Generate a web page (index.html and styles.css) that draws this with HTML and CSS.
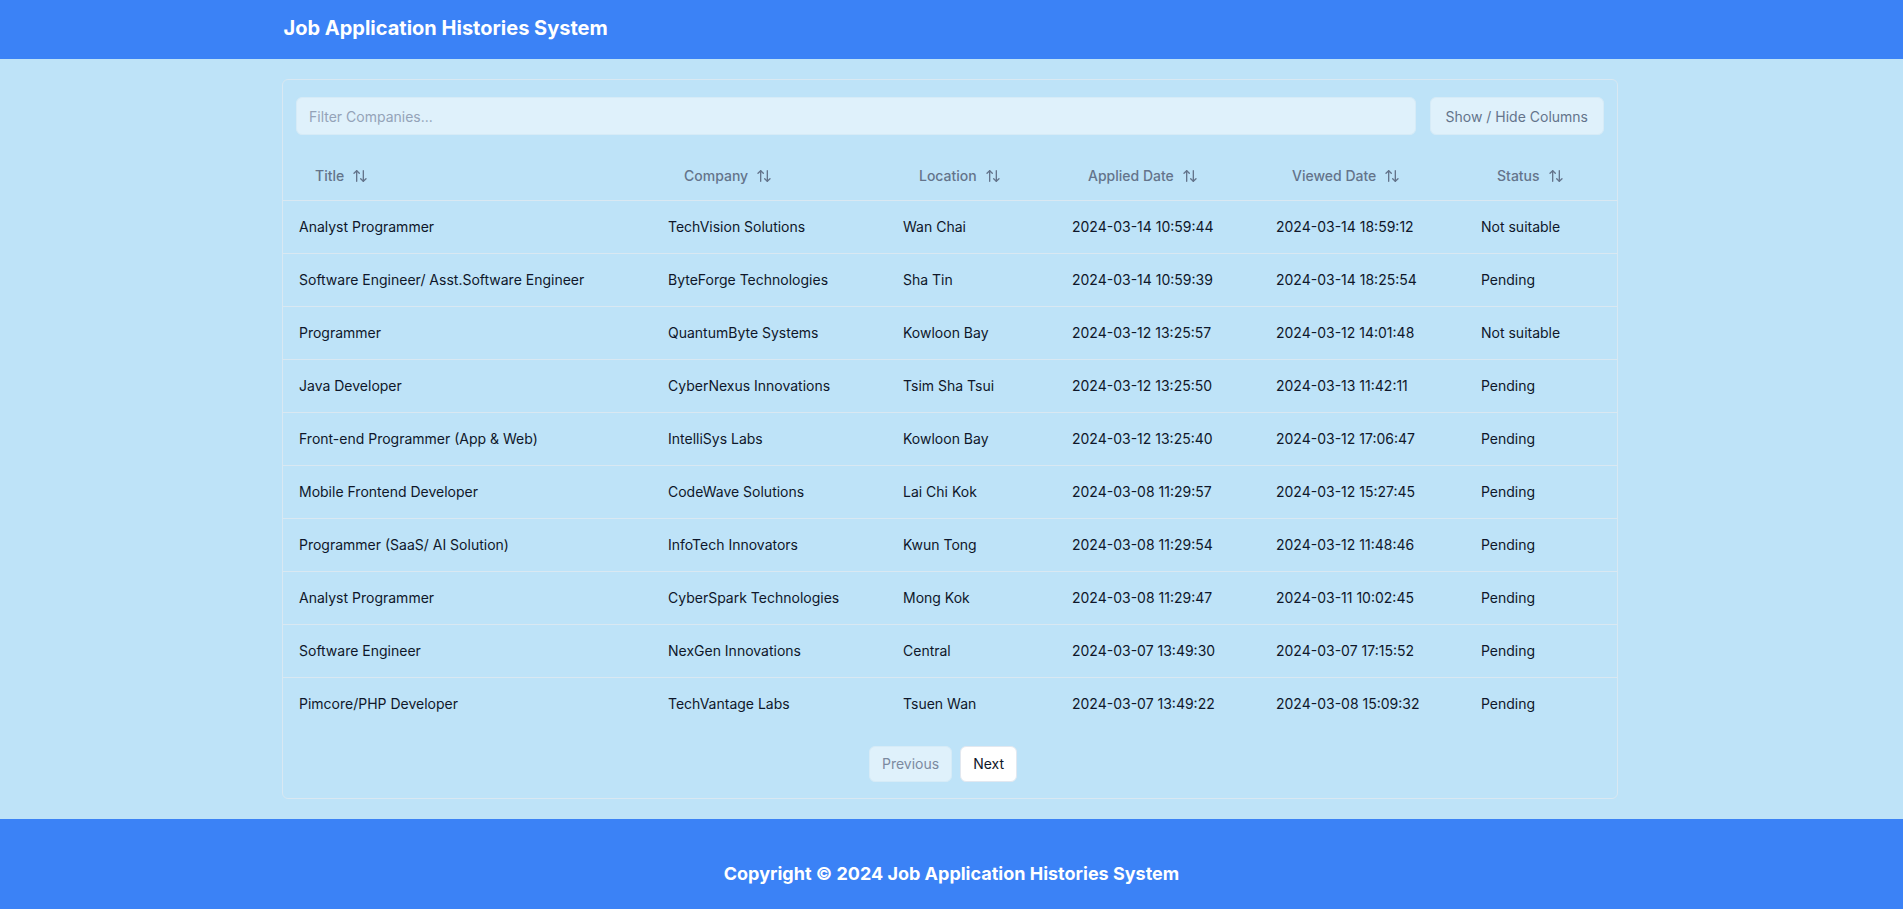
FILE: index.html
```html
<!DOCTYPE html>
<html lang="en">
<head>
<meta charset="utf-8">
<title>Job Application Histories System</title>
<link rel="stylesheet" href="styles.css">
</head>
<body>
<header class="topbar">
  <div class="container">
    <h1 class="brand">Job Application Histories System</h1>
  </div>
</header>
<main class="main">
  <div class="container card">
    <div class="toolbar">
      <input class="filter" type="text" placeholder="Filter Companies...">
      <button class="cols-btn">Show / Hide Columns</button>
    </div>
    <table class="grid">
      <colgroup>
        <col class="c-title"><col class="c-company"><col class="c-location"><col class="c-applied"><col class="c-viewed"><col class="c-status">
      </colgroup>
      <thead>
        <tr>
          <th><span class="sort">Title <svg class="ico" viewBox="0 0 24 24"><path d="m21 16-4 4-4-4"/><path d="M17 20V4"/><path d="m3 8 4-4 4 4"/><path d="M7 4v16"/></svg></span></th>
          <th><span class="sort">Company <svg class="ico" viewBox="0 0 24 24"><path d="m21 16-4 4-4-4"/><path d="M17 20V4"/><path d="m3 8 4-4 4 4"/><path d="M7 4v16"/></svg></span></th>
          <th><span class="sort">Location <svg class="ico" viewBox="0 0 24 24"><path d="m21 16-4 4-4-4"/><path d="M17 20V4"/><path d="m3 8 4-4 4 4"/><path d="M7 4v16"/></svg></span></th>
          <th><span class="sort">Applied Date <svg class="ico" viewBox="0 0 24 24"><path d="m21 16-4 4-4-4"/><path d="M17 20V4"/><path d="m3 8 4-4 4 4"/><path d="M7 4v16"/></svg></span></th>
          <th><span class="sort">Viewed Date <svg class="ico" viewBox="0 0 24 24"><path d="m21 16-4 4-4-4"/><path d="M17 20V4"/><path d="m3 8 4-4 4 4"/><path d="M7 4v16"/></svg></span></th>
          <th><span class="sort">Status <svg class="ico" viewBox="0 0 24 24"><path d="m21 16-4 4-4-4"/><path d="M17 20V4"/><path d="m3 8 4-4 4 4"/><path d="M7 4v16"/></svg></span></th>
        </tr>
      </thead>
      <tbody>
        <tr><td>Analyst Programmer</td><td>TechVision Solutions</td><td>Wan Chai</td><td>2024-03-14 10:59:44</td><td>2024-03-14 18:59:12</td><td>Not suitable</td></tr>
        <tr><td>Software Engineer/ Asst.Software Engineer</td><td>ByteForge Technologies</td><td>Sha Tin</td><td>2024-03-14 10:59:39</td><td>2024-03-14 18:25:54</td><td>Pending</td></tr>
        <tr><td>Programmer</td><td>QuantumByte Systems</td><td>Kowloon Bay</td><td>2024-03-12 13:25:57</td><td>2024-03-12 14:01:48</td><td>Not suitable</td></tr>
        <tr><td>Java Developer</td><td>CyberNexus Innovations</td><td>Tsim Sha Tsui</td><td>2024-03-12 13:25:50</td><td>2024-03-13 11:42:11</td><td>Pending</td></tr>
        <tr><td>Front-end Programmer (App &amp; Web)</td><td>IntelliSys Labs</td><td>Kowloon Bay</td><td>2024-03-12 13:25:40</td><td>2024-03-12 17:06:47</td><td>Pending</td></tr>
        <tr><td>Mobile Frontend Developer</td><td>CodeWave Solutions</td><td>Lai Chi Kok</td><td>2024-03-08 11:29:57</td><td>2024-03-12 15:27:45</td><td>Pending</td></tr>
        <tr><td>Programmer (SaaS/ AI Solution)</td><td>InfoTech Innovators</td><td>Kwun Tong</td><td>2024-03-08 11:29:54</td><td>2024-03-12 11:48:46</td><td>Pending</td></tr>
        <tr><td>Analyst Programmer</td><td>CyberSpark Technologies</td><td>Mong Kok</td><td>2024-03-08 11:29:47</td><td>2024-03-11 10:02:45</td><td>Pending</td></tr>
        <tr><td>Software Engineer</td><td>NexGen Innovations</td><td>Central</td><td>2024-03-07 13:49:30</td><td>2024-03-07 17:15:52</td><td>Pending</td></tr>
        <tr><td>Pimcore/PHP Developer</td><td>TechVantage Labs</td><td>Tsuen Wan</td><td>2024-03-07 13:49:22</td><td>2024-03-08 15:09:32</td><td>Pending</td></tr>
      </tbody>
    </table>
    <div class="pager">
      <button class="pg-btn pg-disabled" disabled>Previous</button>
      <button class="pg-btn pg-active">Next</button>
    </div>
  </div>
</main>
<footer class="footer">
  <p class="copy">Copyright © 2024 Job Application Histories System</p>
</footer>
</body>
</html>
```

FILE: styles.css
```css
* { box-sizing: border-box; }
html, body { margin: 0; padding: 0; }
body {
  font-family: Inter, "Noto Sans", "Liberation Sans", sans-serif;
  background: #bee3f8;
  color: #0f172a;
  font-size: 14px;
  line-height: 20px;
}
.container {
  width: 1336px;
  margin: 0 auto;
}
.topbar {
  background: #3b82f6;
  height: 59px;
  padding-top: 14px;
}
.brand {
  margin: 0;
  color: #fff;
  font-size: 20px;
  line-height: 28px;
  font-weight: 700;
}
.main {
  padding: 20px 3px 20px 0;
}
.card {
  border: 1px solid #d9e8f2;
  border-radius: 6px;
}
.toolbar {
  display: flex;
  gap: 14px;
  padding: 17px 13px;
}
.filter {
  flex: 1;
  min-width: 0;
  height: 38px;
  border: 1px solid #d6ebf7;
  border-radius: 6px;
  background: #dff1fb;
  padding: 0 12px;
  font-family: inherit;
  font-size: 14px;
  color: #0f172a;
  outline: none;
}
.filter::placeholder { color: #94a3b8; }
.cols-btn {
  flex: none;
  white-space: nowrap;
  height: 38px;
  border: 1px solid #d6ebf7;
  border-radius: 6px;
  background: #dff1fb;
  color: #64748b;
  font-family: inherit;
  font-size: 14px;
  padding: 0 15px;
}
.grid {
  width: 100%;
  border-collapse: collapse;
  table-layout: fixed;
}
.c-title { width: 369px; }
.c-company { width: 235px; }
.c-location { width: 169px; }
.c-applied { width: 204px; }
.c-viewed { width: 205px; }
.c-status { width: 152px; }
thead tr { border-bottom: 1px solid #d9e8f2; }
th {
  height: 48px;
  padding: 0 16px;
  text-align: left;
  font-weight: 500;
  color: #64748b;
}
.sort {
  display: inline-flex;
  align-items: center;
  padding: 0 16px;
  height: 36px;
}
.ico {
  width: 16px;
  height: 16px;
  margin-left: 8px;
  fill: none;
  stroke: currentColor;
  stroke-width: 2;
  stroke-linecap: round;
  stroke-linejoin: round;
}
tbody tr { border-bottom: 1px solid #d9e8f2; }
tbody tr:last-child { border-bottom: 0; }
td {
  padding: 16px;
  white-space: nowrap;
}
.pager {
  display: flex;
  justify-content: center;
  gap: 8px;
  padding: 16px 14px 16px 0;
}
.pg-btn {
  height: 36px;
  padding: 0 12px;
  border-radius: 6px;
  font-family: inherit;
  font-size: 14px;
  border: 1px solid #d6ebf7;
}
.pg-disabled {
  background: #dff1fb;
  color: #7b8aa0;
}
.pg-active {
  background: #fff;
  color: #0f172a;
  border-color: #e2e8f0;
}
.footer {
  background: #3b82f6;
  height: 90px;
  padding-top: 41px;
}
.copy {
  margin: 0;
  text-align: center;
  color: #fff;
  font-size: 18px;
  line-height: 28px;
  font-weight: 700;
}
```
